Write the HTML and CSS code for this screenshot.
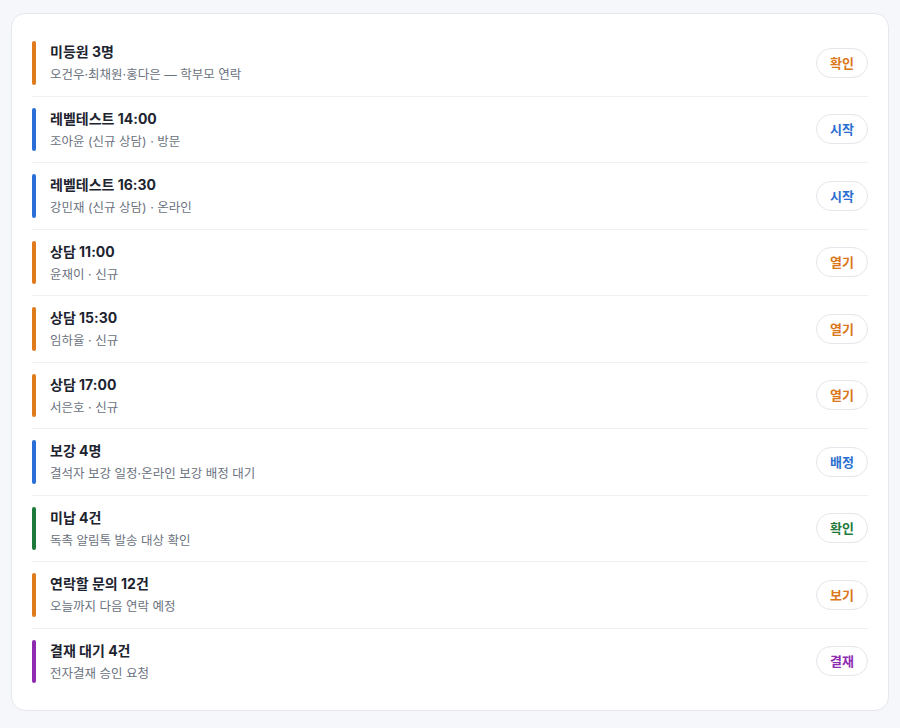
FILE: index.html
```html
<!DOCTYPE html>
<html lang="ko">
<head>
<meta charset="utf-8">
<link rel="stylesheet" href="styles.css">
</head>
<body>
<div class="card">
  <div class="row">
    <span class="bar orange"></span>
    <div class="text"><div class="title">미등원 3명</div><div class="sub">오건우·최채원·홍다은 — 학부모 연락</div></div>
    <button class="pill orange-t">확인</button>
  </div>
  <div class="row">
    <span class="bar blue"></span>
    <div class="text"><div class="title">레벨테스트 14:00</div><div class="sub">조아윤 (신규 상담) · 방문</div></div>
    <button class="pill blue-t">시작</button>
  </div>
  <div class="row">
    <span class="bar blue"></span>
    <div class="text"><div class="title">레벨테스트 16:30</div><div class="sub">강민재 (신규 상담) · 온라인</div></div>
    <button class="pill blue-t">시작</button>
  </div>
  <div class="row">
    <span class="bar orange"></span>
    <div class="text"><div class="title">상담 11:00</div><div class="sub">윤재이 · 신규</div></div>
    <button class="pill orange-t">열기</button>
  </div>
  <div class="row">
    <span class="bar orange"></span>
    <div class="text"><div class="title">상담 15:30</div><div class="sub">임하율 · 신규</div></div>
    <button class="pill orange-t">열기</button>
  </div>
  <div class="row">
    <span class="bar orange"></span>
    <div class="text"><div class="title">상담 17:00</div><div class="sub">서은호 · 신규</div></div>
    <button class="pill orange-t">열기</button>
  </div>
  <div class="row">
    <span class="bar blue"></span>
    <div class="text"><div class="title">보강 4명</div><div class="sub">결석자 보강 일정·온라인 보강 배정 대기</div></div>
    <button class="pill blue-t">배정</button>
  </div>
  <div class="row">
    <span class="bar green"></span>
    <div class="text"><div class="title">미납 4건</div><div class="sub">독촉 알림톡 발송 대상 확인</div></div>
    <button class="pill green-t">확인</button>
  </div>
  <div class="row">
    <span class="bar orange"></span>
    <div class="text"><div class="title">연락할 문의 12건</div><div class="sub">오늘까지 다음 연락 예정</div></div>
    <button class="pill orange-t">보기</button>
  </div>
  <div class="row">
    <span class="bar purple"></span>
    <div class="text"><div class="title">결재 대기 4건</div><div class="sub">전자결재 승인 요청</div></div>
    <button class="pill purple-t">결재</button>
  </div>
</div>
</body>
</html>
```
FILE: styles.css
```css
html, body {
  margin: 0;
  padding: 0;
  background: #f6f7fb;
}
body {
  padding: 13px 11px;
  font-family: "Inter", "Noto Sans CJK KR", sans-serif;
}
.card {
  background: #ffffff;
  border: 1px solid #e4e7ec;
  border-radius: 14px;
  padding: 16px 20px;
}
.row {
  display: flex;
  align-items: center;
  padding: 11px 0;
  border-bottom: 1px solid #eef0f3;
}
.row:last-child {
  border-bottom: none;
}
.bar {
  width: 4px;
  align-self: stretch;
  border-radius: 2px;
  margin-right: 14px;
  flex: none;
}
.orange { background: #e07b1c; }
.blue { background: #2a6fd8; }
.green { background: #1d7a3a; }
.purple { background: #8e2bb0; }
.text {
  flex: 1;
  display: flex;
  flex-direction: column;
  gap: 2px;
}
.title {
  font-size: 14px;
  font-weight: 700;
  line-height: 22px;
  color: #1d2430;
}
.sub {
  font-size: 12.5px;
  line-height: 19.5px;
  color: #6b7280;
}
.pill {
  font-family: "Inter", "Noto Sans CJK KR", sans-serif;
  font-size: 13px;
  font-weight: 600;
  height: 30px;
  padding: 0 13px;
  border-radius: 15px;
  border: 1px solid #e3e6eb;
  background: #ffffff;
  line-height: 28px;
}
.orange-t { color: #d9771a; }
.blue-t { color: #2a6fd0; }
.green-t { color: #1d7a3a; }
.purple-t { color: #8e2bb0; }
```
